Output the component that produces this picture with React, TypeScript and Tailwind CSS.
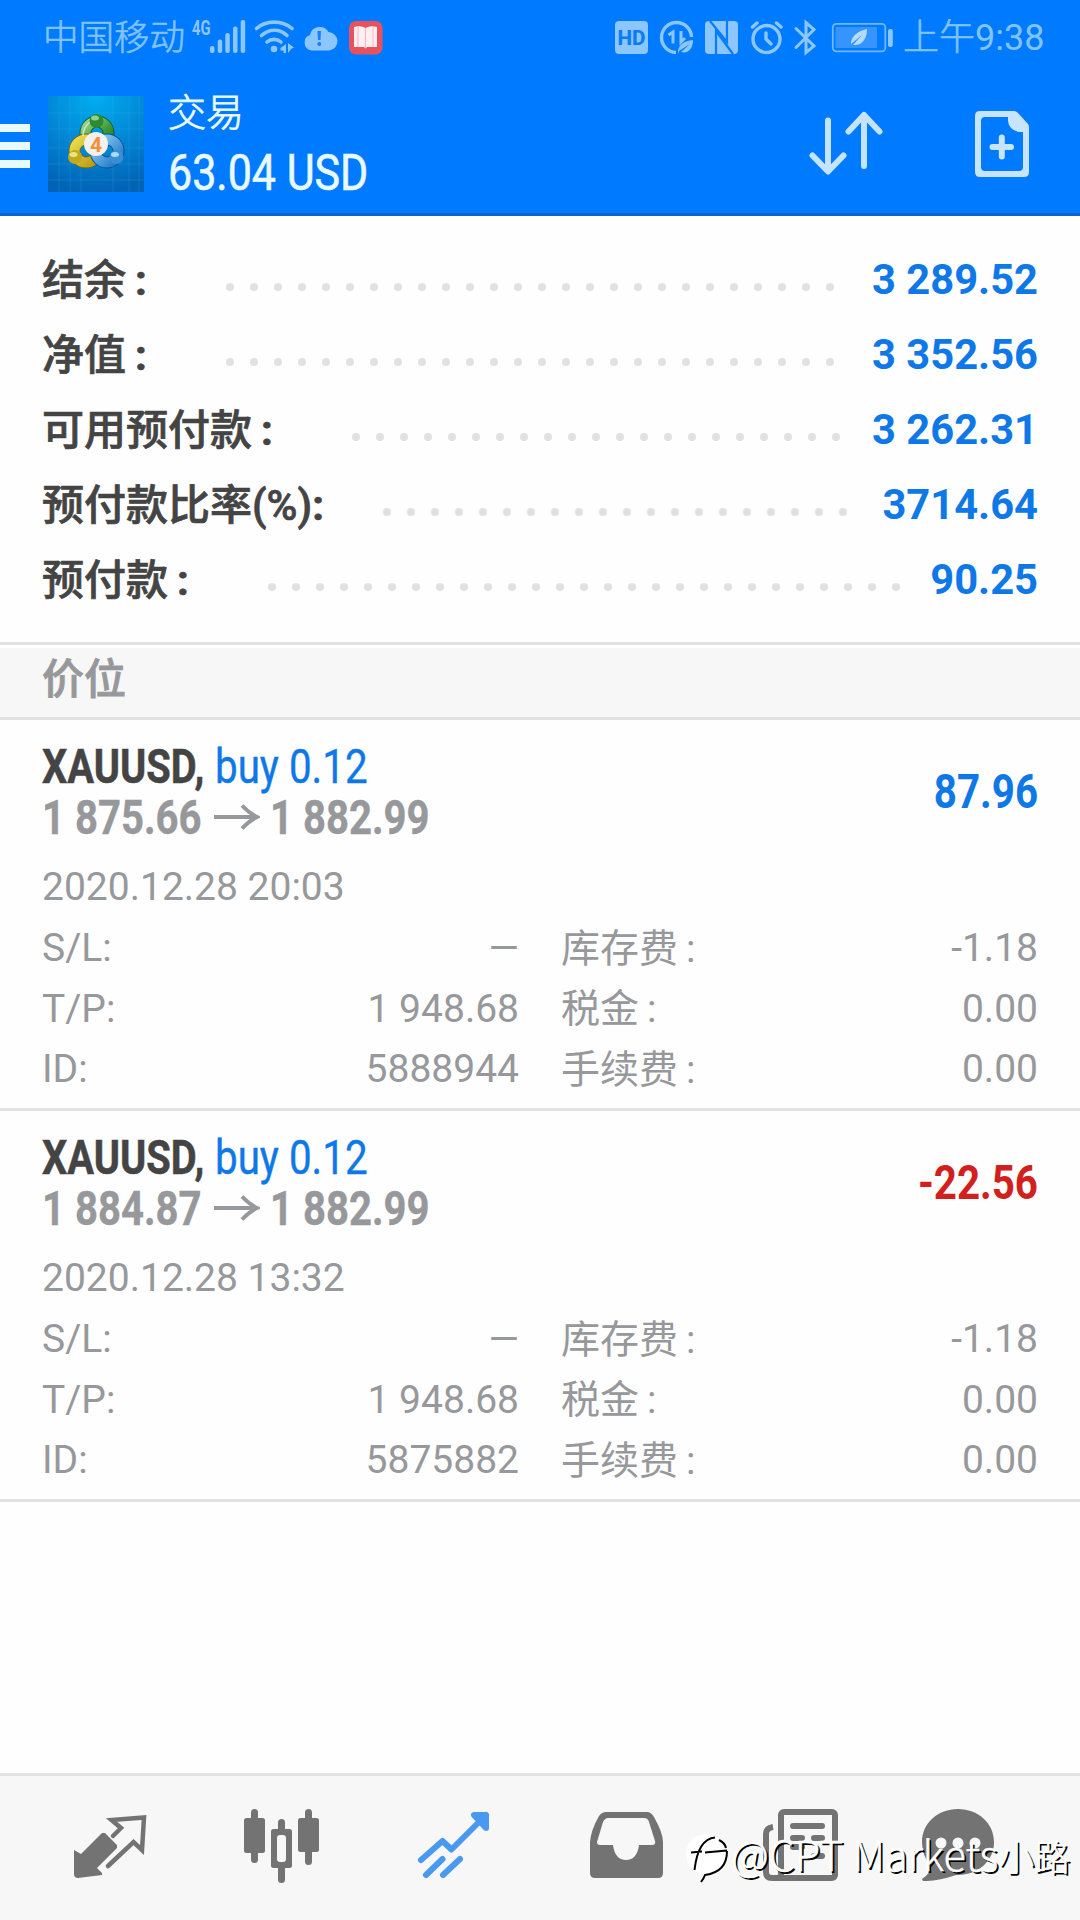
import React from 'react'

interface SummaryRow {
    label: string;
    colonClass: string;
    value: string;
    labelWidth: string;
    dots: number;
}

interface Position {
    id: string;
    symbol: string;
    side: string;
    open: string;
    current: string;
    profit: string;
    profitColor: string;
    date: string;
    takeProfit: string;
    swap: string;
}

const summary: SummaryRow[] = [
    { label: '结余', colonClass: 'ml-[9px]', value: '3 289.52', labelWidth: 'w-[184px]', dots: 26 },
    { label: '净值', colonClass: 'ml-[9px]', value: '3 352.56', labelWidth: 'w-[184px]', dots: 26 },
    { label: '可用预付款', colonClass: 'ml-[9px]', value: '3 262.31', labelWidth: 'w-[310px]', dots: 21 },
    { label: '预付款比率(%)', colonClass: 'ml-0', value: '3714.64', labelWidth: 'w-[341px]', dots: 20 },
    { label: '预付款', colonClass: 'ml-[9px]', value: '90.25', labelWidth: 'w-[226px]', dots: 27 },
]

const positions: Position[] = [
    {
        id: '5888944',
        symbol: 'XAUUSD,',
        side: 'buy 0.12',
        open: '1 875.66',
        current: '1 882.99',
        profit: '87.96',
        profitColor: 'text-[#0f78e8]',
        date: '2020.12.28 20:03',
        takeProfit: '1 948.68',
        swap: '-1.18',
    },
    {
        id: '5875882',
        symbol: 'XAUUSD,',
        side: 'buy 0.12',
        open: '1 884.87',
        current: '1 882.99',
        profit: '-22.56',
        profitColor: 'text-[#d2201f]',
        date: '2020.12.28 13:32',
        takeProfit: '1 948.68',
        swap: '-1.18',
    },
]

function StatusIconsLeft() {
    return (
        <svg width="198" height="40" viewBox="188 16 198 40" className="shrink-0" fill="#8cc6ff">
            <text x="192" y="34" fontSize="20" fontWeight="700" textLength="18.500" lengthAdjust="spacingAndGlyphs">4G</text>
            <rect x="210" y="45" width="4.500" height="7" rx="2" />
            <rect x="217.700" y="38.500" width="4.500" height="13.500" rx="2" />
            <rect x="225.300" y="32" width="4.500" height="20" rx="2" />
            <rect x="233" y="25.500" width="4.500" height="26.500" rx="2" />
            <rect x="240.700" y="19" width="4.500" height="33" rx="2" />
            <g fill="none" stroke="#8cc6ff" strokeWidth="3.600" strokeLinecap="round">
                <path d="M256.500 27.500C266 19 282 19 292 27.500" />
                <path d="M261.500 34.500C269 27.500 280 27.500 287 34.500" />
                <path d="M267 41C271 37.500 277 37.500 281 41" />
            </g>
            <circle cx="274" cy="48" r="3.300" />
            <path d="M286 43V52H283.500V49.500H280.500V47ZM288 42L294 46.500L291 48L288 52Z" />
            <path d="M311.500 49.500a8 8 0 0 1-1.500-15.500a10 10 0 0 1 18.500-3a9.300 9.300 0 0 1 1 18.500Z" />
            <path d="M317.500 30h3.500l-.5 9h-2.500Z" fill="#1580ff" />
            <circle cx="319.300" cy="43" r="2" fill="#1580ff" />
            <rect x="349" y="20" width="33.500" height="33.500" rx="7" fill="#e8525e" />
            <path d="M354 26Q361 24 365.500 27Q370 24 377 26V46H367L365.500 47.500L364 46H354Z" fill="#ffeef2" />
            <path d="M365.500 27V47M358 26V46M373 26V46" stroke="#f3b7c2" strokeWidth="1" />
        </svg>
    )
}

function StatusIconsRight() {
    return (
        <svg width="284" height="40" viewBox="612 16 284 40" className="shrink-0" fill="#8cc6ff">
            <rect x="615" y="20" width="33" height="33" rx="4" />
            <text x="617.500" y="44" fontSize="21" fontWeight="800" fill="#0a7aff" textLength="28" lengthAdjust="spacingAndGlyphs">HD</text>
            <g fill="none" stroke="#8cc6ff">
                <path d="M676 51.500A15 15 0 1 1 691.500 36" strokeWidth="3.400" />
                <path d="M668.500 34L673 31V42.500M681 30V41L685 37" strokeWidth="3" />
            </g>
            <path d="M678 53C677 44 684 40 693 39C693 48 688 53 681 51L690 43L679 50Z" />
            <rect x="705" y="20" width="33" height="33" rx="4" />
            <path d="M710 20L727 41V20M716 53V30L733 53" fill="none" stroke="#067cff" strokeWidth="2.200" />
            <g fill="none" stroke="#8cc6ff" strokeWidth="3.400" strokeLinecap="round">
                <circle cx="766.500" cy="38" r="13.500" />
                <path d="M752.500 26L757 22M776.500 22L781 26M766 32V38L771 43" />
                <path d="M796 27.500L814 45L806 51.500V21.500L814 28.500L796 46.500" strokeWidth="3" />
            </g>
            <rect x="832.800" y="22.800" width="52.500" height="27.500" rx="3.500" fill="none" stroke="#6fb7ff" strokeWidth="1.800" />
            <rect x="835.500" y="26" width="41.500" height="21" rx="1" fill="#3694ff" />
            <path d="M851 45C850 36 857 30 867 28C867 38 862 45 853 44L862 34L851 43Z" fill="#b5dbff" />
            <rect x="888" y="28" width="4.800" height="18" rx="2" />
        </svg>
    )
}

function AppLogo() {
    return (
        <svg width="96" height="96" viewBox="0 0 96 96" className="ml-[18px] shrink-0">
            <defs>
                <radialGradient id="bg" cx="0.5" cy="0" r="1">
                    <stop offset="0" stopColor="#00aef0" />
                    <stop offset="0.5" stopColor="#0289d8" />
                    <stop offset="1" stopColor="#0263b5" />
                </radialGradient>
                <linearGradient id="green" x1="0" y1="0" x2="1" y2="1">
                    <stop offset="0" stopColor="#9bd38a" />
                    <stop offset="0.6" stopColor="#3f9c3a" />
                    <stop offset="1" stopColor="#1d7d25" />
                </linearGradient>
                <linearGradient id="yellow" x1="0" y1="0" x2="1" y2="1">
                    <stop offset="0" stopColor="#e9dc4e" />
                    <stop offset="1" stopColor="#b89a10" />
                </linearGradient>
                <linearGradient id="blue" x1="0" y1="0" x2="1" y2="1">
                    <stop offset="0" stopColor="#8fd0f5" />
                    <stop offset="1" stopColor="#1f78c8" />
                </linearGradient>
            </defs>
            <rect width="96" height="96" fill="url(#bg)" />
            <path d="M11 0V96M22 0V96M33 0V96M65 0V96M81 0V96M91 0V96M0 17H96M0 33H96M0 52H96M0 68H96M0 84H96" stroke="#4bb8ec" strokeOpacity="0.2" />
            <g fill="none" strokeWidth="10">
                <circle cx="49" cy="37" r="11.500" stroke="#145f2a" strokeWidth="12" />
                <circle cx="49" cy="37" r="11.500" stroke="url(#green)" />
                <circle cx="38" cy="55" r="11.500" stroke="#75680f" strokeWidth="12" />
                <circle cx="38" cy="55" r="11.500" stroke="url(#yellow)" />
                <circle cx="59" cy="55" r="11.500" stroke="#0a4f94" strokeWidth="12" />
                <circle cx="59" cy="55" r="11.500" stroke="url(#blue)" />
            </g>
            <path d="M35 40Q35 31 42 26" fill="none" stroke="#dff3d8" strokeOpacity="0.8" strokeWidth="1.500" />
            <circle cx="48.500" cy="25" r="7" fill="#2c8a33" />
            <ellipse cx="47" cy="22" rx="4" ry="2.500" fill="#8fd08a" />
            <circle cx="27" cy="61" r="7" fill="#bfa91d" />
            <ellipse cx="25.500" cy="58.500" rx="4" ry="2.500" fill="#ece384" />
            <circle cx="68.500" cy="61" r="7" fill="#3a8fd2" />
            <ellipse cx="67" cy="58.500" rx="4" ry="2.500" fill="#a9dcf7" />
            <circle cx="48" cy="48" r="12" fill="#f4f1ec" />
            <text x="48" y="55.500" textAnchor="middle" fontSize="21" fontWeight="700" fill="#f0903a">4</text>
        </svg>
    )
}

function Header() {
    return (
        <header className="h-[216px] bg-[#007aff] border-b-[3px] border-[#0b66cf]">
            <div className="h-[74px] flex items-center pl-[43px] pr-[36px] text-[#80c3ff] text-[35.500px] font-light">
                <span className="w-[145px] pt-[3px] whitespace-nowrap [-webkit-text-stroke:0.6px_#80c3ff]">中国移动</span>
                <StatusIconsLeft />
                <span className="flex-1" />
                <StatusIconsRight />
                <span className="w-[141px] ml-[7px] pt-0.5 whitespace-nowrap text-[36px] font-normal">
                    <span className="font-light [-webkit-text-stroke:0.6px_#80c3ff]">上午</span>9:38
                </span>
            </div>
            <div className="flex pt-[22px] text-[#e8f9ff]">
                <div className="w-[30px] pt-7 flex flex-col gap-[10px]">
                    <span className="h-2 bg-[#e8f9ff]" />
                    <span className="h-2 bg-[#e8f9ff]" />
                    <span className="h-2 bg-[#e8f9ff]" />
                </div>
                <AppLogo />
                <div className="ml-[24px] flex-1 flex flex-col whitespace-nowrap">
                    <span className="text-[38px] leading-[34px] font-light [-webkit-text-stroke:0.8px_#e8f9ff]">交易</span>
                    <span className="text-[50px] leading-[60px] mt-[13px] origin-left scale-x-[0.86] w-[240px] [-webkit-text-stroke:0.6px_#e8f9ff]">63.04 USD</span>
                </div>
                <svg width="76" height="68" viewBox="808 108 76 68" className="mt-3 mr-[89px]" fill="none" stroke="#c4e3ff" strokeWidth="6" strokeLinecap="round" strokeLinejoin="round">
                    <path d="M828 120.500V171M812.500 155.500L828 171.500L843.500 155.500M864 166V115M848.500 131.500L864 115L879.500 131.500" />
                </svg>
                <svg width="58" height="70" viewBox="973 109 58 70" className="mt-[13px] mr-[49px]" fill="#c8e5ff">
                    <path fillRule="evenodd" d="M980 111H1014Q1016 111 1018 113L1028 124Q1029 125 1029 128V172Q1029 177 1024 177H980Q975 177 975 172V116Q975 111 980 111ZM985 117Q981 117 981 121V167Q981 171 985 171H1019Q1023 171 1023 167V132H1019Q1009 130 1008 121V117Z" />
                    <path d="M992.500 147H1011M1001.800 137.500V156.500" stroke="#c8e5ff" strokeWidth="6" strokeLinecap="round" />
                </svg>
            </div>
        </header>
    )
}

function Summary() {
    return (
        <section className="h-[429px] pt-[25px] border-b-[3px] border-[#e2e2e2] text-[41.700px] font-bold">
            {summary.map((row) => (
                <div key={row.label} className="h-[75px] pl-[42px] pr-[42px] flex items-center whitespace-nowrap">
                    <span className={`${row.labelWidth} shrink-0 pt-1 text-[#444] text-[42px] font-medium [-webkit-text-stroke:0.7px_#444]`}>
                        {row.label}<span className={`${row.colonClass} font-bold`}>:</span>
                    </span>
                    <div className="flex gap-4 pt-[16px]">
                        {Array.from({ length: row.dots }).map((_, i) => (
                            <span key={i} className="w-2 h-2 rounded-full bg-[#e1e1e1]" />
                        ))}
                    </div>
                    <span className="flex-1 pt-1 text-right text-[#0f78e8]">{row.value}</span>
                </div>
            ))}
        </section>
    )
}

function DetailRow({ label, value, feeLabel, fee }: { label: string; value: string; feeLabel: string; fee: string }) {
    return (
        <div className="h-[60.500px] flex items-center">
            <span className="flex-1">{label}</span>
            <span className="w-[300px] text-right">{value}</span>
            <span className="w-[261px] ml-[42px] pt-px">{feeLabel}<span className="ml-2">:</span></span>
            <span className="w-[216px] text-right">{fee}</span>
        </div>
    )
}

function PositionCard({ item }: { item: Position }) {
    return (
        <article className="h-[391px] border-b-[3px] border-[#e2e2e2] pl-[42px] pr-[42px] text-[#97989b] whitespace-nowrap">
            <div className="h-[136px] flex items-center justify-between text-[48px] leading-[51px] font-bold">
                <div className="pt-[7px]">
                    <div className="flex">
                        <span className="w-[173px]">
                            <span className="inline-block origin-left scale-x-[0.83] text-[#444] [-webkit-text-stroke:0.5px_#444]">{item.symbol}</span>
                        </span>
                        <span className="inline-block origin-left scale-x-[0.84] font-normal text-[#0f78e8] [-webkit-text-stroke:0.4px_#0f78e8]">{item.side}</span>
                    </div>
                    <div className="flex items-center [-webkit-text-stroke:0.4px_#97989b]">
                        <span className="w-[172px]">
                            <span className="inline-block origin-left scale-x-[0.835]">{item.open}</span>
                        </span>
                        <svg width="46" height="26" viewBox="0 0 46 26" fill="none" stroke="#97989b" strokeWidth="4">
                            <path d="M0 13H43M28 1.500Q35 9 43 13Q35 17 28 24.500" />
                        </svg>
                        <span className="ml-[10px] inline-block origin-left scale-x-[0.835]">{item.current}</span>
                    </div>
                </div>
                <span className={`inline-block origin-right scale-x-[0.840] pt-[7px] ${item.profitColor}`}>{item.profit}</span>
            </div>
            <div className="pt-[2px] text-[39px] leading-none">
                <div className="h-[60.500px] pb-0.5 flex items-center">{item.date}</div>
                <DetailRow label="S/L:" value="—" feeLabel="库存费" fee={item.swap} />
                <DetailRow label="T/P:" value={item.takeProfit} feeLabel="税金" fee="0.00" />
                <DetailRow label="ID:" value={item.id} feeLabel="手续费" fee="0.00" />
            </div>
        </article>
    )
}

function BottomNav() {
    return (
        <nav className="relative mt-auto h-[147px] bg-[#f7f7f7] border-t-[3px] border-[#e3e3e3] pt-[30px] pl-[72px] flex text-[#737373]">
            <svg width="76" height="80" viewBox="72 1806 76 80" fill="currentColor">
                <path d="M74 1850L81 1854L102 1833L105 1833L117 1845V1848L97 1868L102 1873V1875L78 1878Q74 1878 74 1874Z" />
                <path d="M113 1836L121 1828L111.500 1820L144 1817.500L142 1850L133.500 1842L108 1866" fill="none" stroke="currentColor" strokeWidth="4.500" strokeLinecap="round" />
            </svg>
            <svg width="76" height="80" viewBox="243 1806 76 80" className="ml-[95px]" fill="currentColor">
                <rect x="251" y="1809" width="7" height="54" rx="3.500" />
                <rect x="244" y="1818" width="21" height="35" rx="2.500" />
                <rect x="305" y="1809" width="7" height="56" rx="3.500" />
                <rect x="298" y="1818" width="21" height="34" rx="2.500" />
                <rect x="278" y="1819" width="7" height="64" rx="3.500" />
                <rect x="271" y="1829" width="21" height="39" rx="2.500" />
                <rect x="277" y="1835" width="9" height="27" rx="3" fill="#f7f7f7" />
            </svg>
            <svg width="76" height="80" viewBox="415 1806 76 80" className="ml-[96px]" fill="none" stroke="#4a99f1" strokeWidth="6" strokeLinecap="round" strokeLinejoin="round">
                <path d="M421 1860L442.500 1841L451.500 1849.500L486 1815M474 1815H486V1828ZM426 1875L442.500 1859M443 1875L460 1859" />
            </svg>
            <svg width="76" height="80" viewBox="588 1806 76 80" className="ml-[97px]" fill="currentColor">
                <path fillRule="evenodd" d="M606 1812H647Q651 1812 654 1817Q663 1833 663 1842V1873Q663 1878 658 1878H595Q590 1878 590 1873V1842Q591 1830 599 1816Q602 1812 606 1812ZM608 1818Q605 1818 603 1822L597 1842Q597 1845 600 1845H613Q615 1860 626 1860Q637 1860 639 1845H652Q656 1845 655 1841L649 1822Q648 1818 644 1818Z" />
            </svg>
            <svg width="76" height="80" viewBox="762 1806 76 80" className="ml-[98px]" fill="none" stroke="currentColor" strokeWidth="6">
                <rect x="781" y="1812" width="54" height="66" rx="3" />
                <path d="M773 1827Q766 1828 766 1834V1872Q766 1878 772 1878H790" />
                <path d="M793 1826H822M793 1838H802M814 1838H822M793 1847H802M814 1856H822" strokeLinecap="round" />
            </svg>
            <svg width="76" height="80" viewBox="920 1806 76 80" className="ml-[82px]" fill="currentColor">
                <path d="M958 1809C978 1809 994 1823 994 1842C994 1861 978 1875 958 1875C952 1875 944 1881 923 1881L922 1879Q931 1873 931 1866Q922 1856 922 1842C922 1823 938 1809 958 1809Z" />
                <circle cx="941" cy="1843" r="5.500" fill="#f7f7f7" />
                <circle cx="958" cy="1843" r="5.500" fill="#f7f7f7" />
                <circle cx="975" cy="1843" r="5.500" fill="#f7f7f7" />
            </svg>
            <div className="absolute left-[684px] top-[53px] flex items-center text-white font-light text-[41.500px] leading-[60px] whitespace-nowrap">
                <svg width="46" height="54" viewBox="0 0 46 54" fill="none">
                    <circle cx="22" cy="24" r="20" fill="#fff" />
                    <path d="M10.500 40Q14 9 31 7.500M7 22.500L18 21.500M21 22.500L43 20.500M35 10Q41 13 42 18M43 21Q43 42 21 45Q20 48 17 52" stroke="#000" strokeWidth="2" />
                </svg>
                <span className="-mt-1.5 ml-px [text-shadow:2px_2px_0_#000] [-webkit-text-stroke:0.5px_#fff] [font-family:'Noto_Sans_CJK_SC',sans-serif]">@CPT Markets<span className="text-[36px]">小路</span></span>
            </div>
        </nav>
    )
}

export default function App() {
    return (
        <div className="w-[1080px] h-[1920px] flex flex-col overflow-hidden bg-[#fefefe] [font-family:Roboto,'Noto_Sans_CJK_SC',sans-serif]">
            <Header />
            <Summary />
            <div className="mt-[3px] h-[72px] pt-0.5 pl-[42px] bg-[#f7f7f7] border-b-[3px] border-[#e2e2e2] text-[42px] leading-[60px] font-medium text-[#97989b] [-webkit-text-stroke:0.8px_#97989b]">
                价位
            </div>
            {positions.map((item) => (
                <PositionCard key={item.id} item={item} />
            ))}
            <BottomNav />
        </div>
    )
}
